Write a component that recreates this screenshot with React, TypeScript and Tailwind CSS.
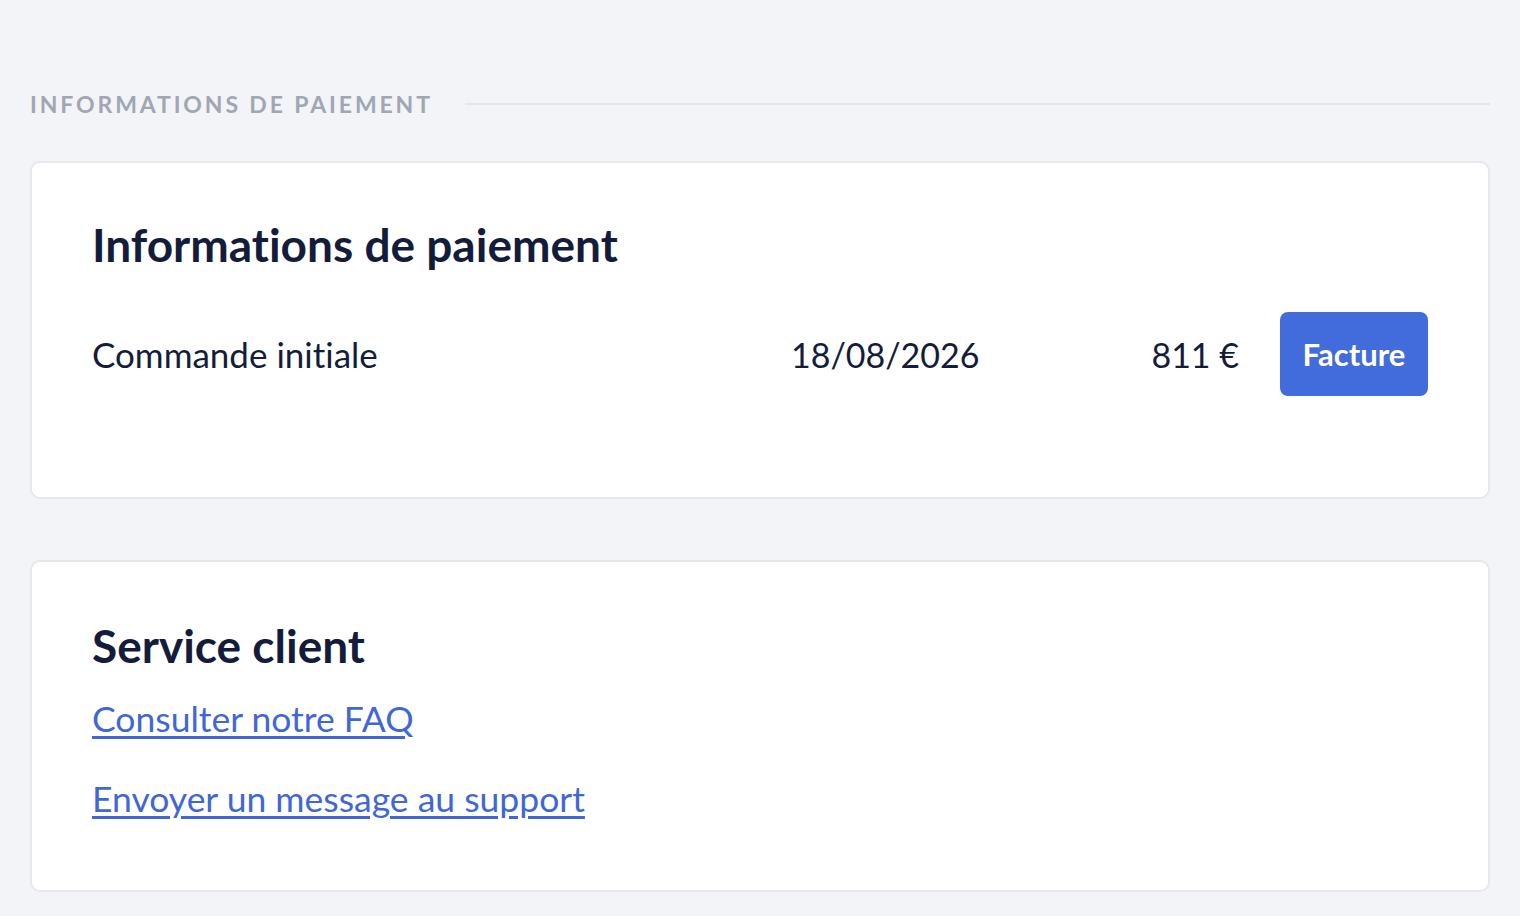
export default function App() {
  return (
    <div className="min-h-screen bg-[#f2f4f8] px-[30px] pt-[80px] pb-[24px] font-['Lato',_sans-serif] text-[#131d3b] [font-variant-ligatures:none]">
      {/* Section label */}
      <div className="flex items-center gap-[32px]">
        <span className="text-[23px] leading-[48px] font-bold tracking-[0.125em] text-[#a0a6b2] uppercase">
          Informations de paiement
        </span>
        <div className="h-[2px] flex-1 bg-[#e2e5eb]" />
      </div>

      {/* Paiement card */}
      <div className="mt-[33px] rounded-[10px] border-2 border-[#e6e8ec] bg-white pl-[60px] pr-[60px] pt-[52px] pb-[101px]">
        <h2 className="text-[46px] leading-[60px] font-bold">Informations de paiement</h2>
        <div className="mt-[37px] flex items-center">
          <span className="w-[699px] text-[35px]">Commande initiale</span>
          <span className="text-[34px]">18/08/2026</span>
          <span className="ml-auto text-[34px]">811 €</span>
          <button className="ml-[41px] h-[84px] w-[148px] rounded-[8px] bg-[#426bdb] text-[31px] font-bold text-white">
            Facture
          </button>
        </div>
      </div>

      {/* Service client card */}
      <div className="mt-[61px] rounded-[10px] border-2 border-[#e6e8ec] bg-white px-[60px] pt-[54px] pb-[68px]">
        <h2 className="text-[46px] leading-[60px] font-bold">Service client</h2>
        <div className="mt-[20px] flex flex-col gap-[34px]">
          <a href="#" className="text-[35.5px] leading-[46px] text-[#3f67d8] underline underline-offset-[4px]">
            Consulter notre FAQ
          </a>
          <a href="#" className="text-[35.5px] leading-[46px] text-[#3f67d8] underline underline-offset-[4px]">
            Envoyer un message au support
          </a>
        </div>
      </div>
    </div>
  );
}
